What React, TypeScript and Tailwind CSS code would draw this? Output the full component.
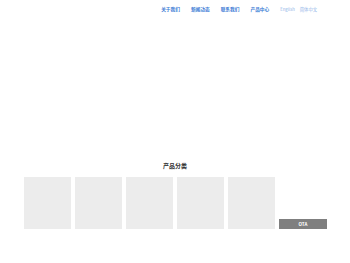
export default function App() {
  const items = ['', '', '', '', '']

  return (
    <div className="w-[350px] h-[263px] bg-white" style={{ fontFamily: '"Noto Sans CJK SC", "Noto Sans", sans-serif' }}>
      <header className="h-[19px] flex items-center justify-end pr-[33px]">
        <nav className="flex items-center gap-[11px] text-[4.7px] font-bold text-[#3a7bd5]">
          <span>关于我们</span>
          <span>新闻动态</span>
          <span>联系我们</span>
          <span>产品中心</span>
        </nav>
        <div className="flex items-center gap-[5px] ml-[11px] text-[4.3px] text-[#8fb3e8]">
          <span>English</span>
          <span>简体中文</span>
        </div>
      </header>

      <section className="mt-[144px]">
        <h2 className="text-center text-[6px] font-bold text-[#333] leading-none">产品分类</h2>
        <div className="mx-auto mt-[8px] w-[303px] grid grid-cols-6 gap-[4px]">
          {items.map((_, i) => (
            <div key={i} className="h-[52px] bg-[#ececec]" />
          ))}
          <div className="h-[52px] flex flex-col justify-end">
            <div className="h-[10px] bg-[#7f7f7f] flex items-center justify-center text-[4.5px] font-bold text-white">
              OTA
            </div>
          </div>
        </div>
      </section>
    </div>
  )
}
